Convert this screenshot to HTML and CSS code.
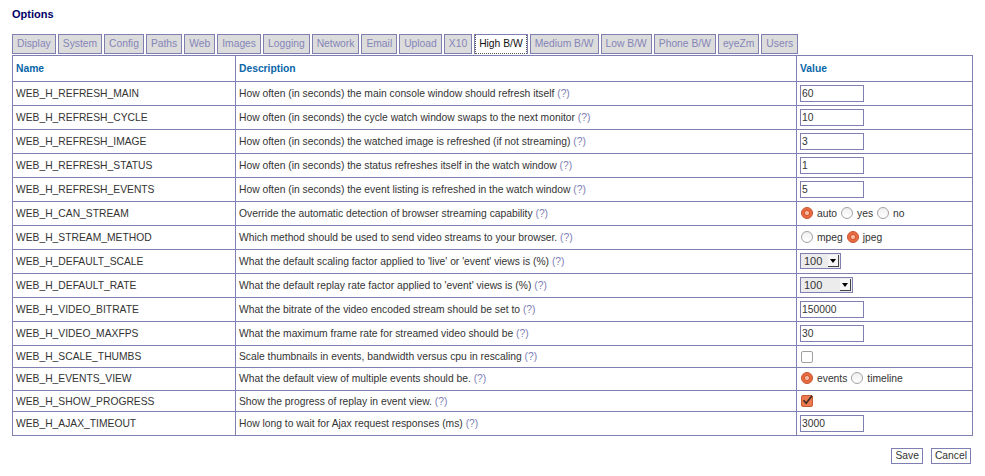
FILE: index.html
```html
<!DOCTYPE html>
<html>
<head>
<meta charset="utf-8">
<title>Options</title>
<link rel="stylesheet" href="styles.css">
</head>
<body>
<div class="page">
  <h2 class="title">Options</h2>
  <ul class="tabs">
    <li class="tab"><a>Display</a></li>
    <li class="tab"><a>System</a></li>
    <li class="tab"><a>Config</a></li>
    <li class="tab"><a>Paths</a></li>
    <li class="tab"><a>Web</a></li>
    <li class="tab"><a>Images</a></li>
    <li class="tab"><a>Logging</a></li>
    <li class="tab"><a>Network</a></li>
    <li class="tab"><a>Email</a></li>
    <li class="tab"><a>Upload</a></li>
    <li class="tab"><a>X10</a></li>
    <li class="tab active"><a>High B/W</a></li>
    <li class="tab"><a>Medium B/W</a></li>
    <li class="tab"><a>Low B/W</a></li>
    <li class="tab"><a>Phone B/W</a></li>
    <li class="tab"><a>eyeZm</a></li>
    <li class="tab"><a>Users</a></li>
  </ul>
  <form class="options-form">
    <table class="opts">
      <colgroup><col class="c1"><col class="c2"><col class="c3"></colgroup>
      <thead>
        <tr><th>Name</th><th>Description</th><th>Value</th></tr>
      </thead>
      <tbody>
        <tr><td>WEB_H_REFRESH_MAIN</td><td>How often (in seconds) the main console window should refresh itself <a class="help">(?)</a></td><td><input class="text" type="text" value="60"></td></tr>
        <tr><td>WEB_H_REFRESH_CYCLE</td><td>How often (in seconds) the cycle watch window swaps to the next monitor <a class="help">(?)</a></td><td><input class="text" type="text" value="10"></td></tr>
        <tr><td>WEB_H_REFRESH_IMAGE</td><td>How often (in seconds) the watched image is refreshed (if not streaming) <a class="help">(?)</a></td><td><input class="text" type="text" value="3"></td></tr>
        <tr><td>WEB_H_REFRESH_STATUS</td><td>How often (in seconds) the status refreshes itself in the watch window <a class="help">(?)</a></td><td><input class="text" type="text" value="1"></td></tr>
        <tr><td>WEB_H_REFRESH_EVENTS</td><td>How often (in seconds) the event listing is refreshed in the watch window <a class="help">(?)</a></td><td><input class="text" type="text" value="5"></td></tr>
        <tr><td>WEB_H_CAN_STREAM</td><td>Override the automatic detection of browser streaming capability <a class="help">(?)</a></td><td><span class="opt"><input class="radio" type="radio" name="cs" checked><span>auto</span></span><span class="opt"><input class="radio" type="radio" name="cs"><span>yes</span></span><span class="opt"><input class="radio" type="radio" name="cs"><span>no</span></span></td></tr>
        <tr><td>WEB_H_STREAM_METHOD</td><td>Which method should be used to send video streams to your browser. <a class="help">(?)</a></td><td><span class="opt"><input class="radio" type="radio" name="sm"><span>mpeg</span></span><span class="opt"><input class="radio" type="radio" name="sm" checked><span>jpeg</span></span></td></tr>
        <tr><td>WEB_H_DEFAULT_SCALE</td><td>What the default scaling factor applied to 'live' or 'event' views is (%) <a class="help">(?)</a></td><td><span class="select s41"><span class="sel-val">100</span><span class="sel-btn"></span></span></td></tr>
        <tr><td>WEB_H_DEFAULT_RATE</td><td>What the default replay rate factor applied to 'event' views is (%) <a class="help">(?)</a></td><td><span class="select s53"><span class="sel-val">100</span><span class="sel-btn"></span></span></td></tr>
        <tr><td>WEB_H_VIDEO_BITRATE</td><td>What the bitrate of the video encoded stream should be set to <a class="help">(?)</a></td><td><input class="text" type="text" value="150000"></td></tr>
        <tr><td>WEB_H_VIDEO_MAXFPS</td><td>What the maximum frame rate for streamed video should be <a class="help">(?)</a></td><td><input class="text" type="text" value="30"></td></tr>
        <tr class="h22"><td>WEB_H_SCALE_THUMBS</td><td>Scale thumbnails in events, bandwidth versus cpu in rescaling <a class="help">(?)</a></td><td><span class="check"></span></td></tr>
        <tr class="h23"><td>WEB_H_EVENTS_VIEW</td><td>What the default view of multiple events should be. <a class="help">(?)</a></td><td><span class="opt"><input class="radio" type="radio" name="ev" checked><span>events</span></span><span class="opt"><input class="radio" type="radio" name="ev"><span>timeline</span></span></td></tr>
        <tr class="h21"><td>WEB_H_SHOW_PROGRESS</td><td>Show the progress of replay in event view. <a class="help">(?)</a></td><td><span class="check on"><svg width="13" height="13" viewBox="0 0 13 13"><path d="M2.5 6.2 L5.2 9.2 L11 1.8" fill="none" stroke="#3d2b22" stroke-width="1.7"/></svg></span></td></tr>
        <tr><td>WEB_H_AJAX_TIMEOUT</td><td>How long to wait for Ajax request responses (ms) <a class="help">(?)</a></td><td><input class="text" type="text" value="3000"></td></tr>
      </tbody>
    </table>
    <div class="actions">
      <button type="button" class="btn">Save</button>
      <button type="button" class="btn">Cancel</button>
    </div>
  </form>
</div>
</body>
</html>
```

FILE: styles.css
```css
* { box-sizing: border-box; }

body {
  margin: 0;
  font-family: "Liberation Sans", Arial, sans-serif;
  font-size: 10.3px;
  color: #333;
  background: #fff;
}

.page {
  padding: 7px 13px 0 12px;
}

.title {
  margin: 0;
  font-size: 11px;
  line-height: 14px;
  font-weight: bold;
  color: #000066;
}

.tabs {
  list-style: none;
  margin: 13px 0 1px;
  padding: 0;
  display: flex;
  gap: 2px;
}

.tab {
  border: 1px solid #7f7fb2;
  background: #dcdcdc;
  color: #8585b8;
}

.tab a {
  display: block;
  padding: 0 4px;
  line-height: 18px;
}

.tab.active {
  background: #fff;
  color: #111;
  border-bottom: none;
}

.tab.active a {
  padding: 0 3px;
  border: 1px dotted #555;
  border-top: none;
}

.opts {
  border-collapse: collapse;
  table-layout: fixed;
  width: 960px;
}

.c1 { width: 223px; }
.c2 { width: 561px; }
.c3 { width: 176px; }

.opts th,
.opts td {
  border: 1px solid #7f7fb2;
  padding: 3px 3px 2px;
  line-height: 18px;
  text-align: left;
  vertical-align: top;
  white-space: nowrap;
}

.opts th {
  padding: 4px 3px;
  line-height: 17px;
  color: #0a66a8;
  font-weight: bold;
}

.opts tr.h22 td { padding-top: 2px; padding-bottom: 1px; }
.opts tr.h23 td { padding-top: 2px; padding-bottom: 2px; }
.opts tr.h21 td { padding-top: 2px; padding-bottom: 0; }

.help {
  color: #8080b4;
}

.text {
  width: 64px;
  height: 17px;
  margin: 0;
  padding: 0 1px;
  border: 1px solid #7f7fb2;
  font: inherit;
  color: #333;
  background: #fff;
  vertical-align: top;
}

.opt {
  display: inline-flex;
  align-items: center;
  margin-right: 3px;
  vertical-align: top;
}

.radio {
  -webkit-appearance: none;
  appearance: none;
  width: 12px;
  height: 12px;
  margin: 0 4px 3px 1px;
  border-radius: 50%;
  border: 1px solid #a2a2a2;
  background: linear-gradient(#f0f0f0, #fff);
}

.radio:checked {
  border-color: #c4532f;
  background: radial-gradient(circle, #f6b9a0 0, #f6b9a0 1.6px, #cf5430 2.4px, #e8663c 3.2px, #ee7b55 100%);
}

.select {
  display: inline-flex;
  height: 16px;
  padding: 1px;
  border: 1px solid #7f7fb2;
  background: #ececec;
  vertical-align: top;
}

.s41 { width: 41px; }
.s53 { width: 53px; }

.sel-val {
  flex: 1;
  padding-left: 2px;
  line-height: 13px;
  font-size: 11px;
}

.sel-btn {
  width: 11px;
  background: #f6f6f6;
  border-right: 1px solid #444;
  border-bottom: 1px solid #444;
  display: flex;
  align-items: center;
  justify-content: center;
}

.sel-btn::after {
  content: "";
  border-left: 3px solid transparent;
  border-right: 3px solid transparent;
  border-top: 4px solid #000;
}

.check {
  display: inline-block;
  width: 12px;
  height: 12px;
  margin: 3px 0 0 1px;
  border: 1px solid #a0a0a0;
  border-radius: 2px;
  background: #fff;
  vertical-align: top;
  position: relative;
}

.check.on {
  margin-top: 2px;
  border-color: #c55a34;
  background: #ec7a50;
}

.check svg {
  position: absolute;
  left: -1px;
  top: -2px;
}

.actions {
  display: flex;
  justify-content: flex-end;
  gap: 8px;
  width: 960px;
  margin-top: 12px;
  padding-right: 1px;
}

.btn {
  margin: 0;
  height: 16px;
  padding: 0 3px;
  border: 1px solid #7f7fb2;
  background: #fff;
  font: inherit;
  line-height: 14px;
  color: #333;
}
```
